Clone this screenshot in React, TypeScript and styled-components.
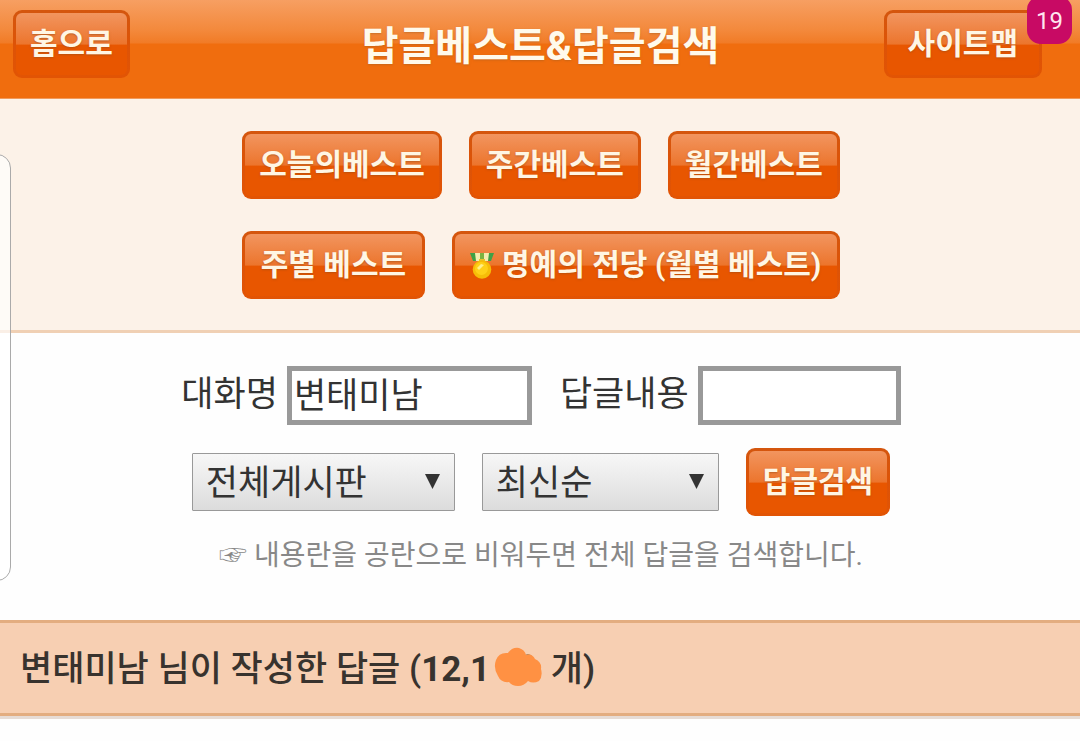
import React from "react";
import styled, { createGlobalStyle, css } from "styled-components";

const GlobalStyle = createGlobalStyle`
  *, *::before, *::after { box-sizing: border-box; }
  body {
    margin: 0;
    background: #fefefe;
    color: #333;
    font-family: Roboto, "Noto Sans CJK KR", sans-serif;
  }
  button, input, select { font-family: inherit; margin: 0; }
`;

const Page = styled.div`
  position: relative;
  overflow: hidden;
  padding-bottom: 20px;
`;

const Header = styled.header`
  display: grid;
  grid-template-columns: 1fr auto 1fr;
  align-items: start;
  padding: 10px 38px 18px 13px;
  border-bottom: 1px solid #f09a5c;
  background: linear-gradient(#f79f62 0, #f3893c 30px, #f17b26 43px, #f06d0e 44px);
`;

const Title = styled.h1`
  margin: 0;
  padding: 4px 0 0 26px;
  font-size: 40px;
  line-height: 66px;
  font-weight: 700;
  color: #fffaec;
  text-shadow: 0 1px 2px #a8602088;
`;

const GlossyButton = styled.button<{ $wide?: boolean }>`
  display: inline-flex;
  align-items: center;
  justify-content: center;
  gap: 8px;
  height: 68px;
  padding: 0 ${(p) => (p.$wide ? 21 : 14)}px;
  border: 3px solid transparent;
  border-radius: 9px;
  background:
    linear-gradient(#f2955f 0, #ec752d 50%, #e85600 52%, #e85600 100%) padding-box,
    linear-gradient(#d4560e 0, #dd5307 50%, #e25404 100%) border-box;
  color: #fff6e4;
  font-size: 30px;
  line-height: 44px;
  font-weight: 700;
  white-space: nowrap;
  text-shadow: 0 1px 2px #9c4c1499;
  cursor: pointer;
`;

const SitemapSlot = styled.div`
  position: relative;
  justify-self: end;
`;

const Badge = styled.span`
  position: absolute;
  top: -14px;
  right: -30px;
  width: 45px;
  padding: 8px 0 6px;
  border-radius: 14px;
  background: #c80a64;
  color: #ffe6f0;
  font-size: 24px;
  line-height: 34px;
  text-align: center;
`;

const BestNav = styled.nav`
  display: grid;
  justify-content: center;
  gap: 32px;
  padding: 32px 14px 31px 16px;
  border-bottom: 3px solid #f0d0b4;
  background: #fcf2e8;
`;

const Row = styled.div<{ $gap: number }>`
  display: flex;
  flex-wrap: wrap;
  align-items: center;
  justify-content: center;
  gap: ${(p) => p.$gap}px;
`;

const NavRow = styled(Row)`
  & > ${GlossyButton} { flex: 1 1 auto; }
`;

const SearchForm = styled.form`
  display: flex;
  flex-direction: column;
  align-items: center;
  padding: 33px 14px 43px 16px;
`;

const Field = styled.div`
  display: flex;
  align-items: center;
  gap: 9px;
`;

const Label = styled.label`
  padding-bottom: 2px;
  font-size: 35px;
  line-height: 48px;
`;

const controlText = css`
  font-size: 35px;
  line-height: 48px;
  color: #333;
`;

const TextInput = styled.input<{ $width: number }>`
  ${controlText}
  width: ${(p) => p.$width}px;
  height: 59px;
  padding: 0 2px 6px;
  border: 5px solid #999;
  border-radius: 0;
  background: #fff;
  outline: none;
`;

const Controls = styled(Row)`
  margin-top: 23px;
`;

const SelectBox = styled.div`
  position: relative;
  display: flex;
`;

const Select = styled.select<{ $width: number }>`
  ${controlText}
  appearance: none;
  width: ${(p) => p.$width}px;
  height: 58px;
  padding: 4px 13px 0;
  border: 1px solid #999;
  border-radius: 1px;
  background: linear-gradient(#f7f7f7, #dcdcdc);
`;

const Arrow = styled.svg`
  position: absolute;
  right: 15px;
  top: 21px;
  pointer-events: none;
`;

const Hint = styled.p`
  margin: 19px 0 0;
  color: #888;
  font-size: 28px;
  line-height: 42px;
`;

const Summary = styled.h2`
  margin: 0;
  padding: 23px 20px 19px;
  border-top: 3px solid #e3ad80;
  border-bottom: 3px solid #e3ad80;
  box-shadow: 0 3px 0 #e6dcd6;
  background: #f7cfb2;
  color: #38332e;
  font-size: 35px;
  line-height: 48px;
  font-weight: 500;
`;

const Count = styled.span`
  font-weight: 700;
`;

const Scribble = styled.svg`
  vertical-align: -6px;
  margin-left: 4px;
`;

const EdgePanel = styled.div`
  position: absolute;
  left: -30px;
  top: 154px;
  width: 41px;
  height: 427px;
  border: 1px solid #aaa;
  border-radius: 14px;
  background: #ffffffaa;
  pointer-events: none;
`;

function Medal() {
  return (
    <svg width="24" height="28" viewBox="0 0 24 28" aria-hidden="true">
      <path d="M0 2h24l-3 8H3z" fill="#3fa046" />
      <path d="M5 2h5v8H6zM14 2h5l-1 8h-4z" fill="#f3edb0" />
      <path d="M10 2h4v8h-4z" fill="#7cb342" />
      <path d="M9 8h6v3H9z" fill="#e8c22c" />
      <circle cx="12" cy="18.5" r="9.3" fill="#f6bd08" />
      <circle cx="11.5" cy="17.5" r="6.5" fill="#ffd018" />
      <path d="M7 17l4-4 3 1-5 5z" fill="#fff08a" />
    </svg>
  );
}

function Dropdown({ width, label, options }: { width: number; label: string; options: string[] }) {
  return (
    <SelectBox>
      <Select $width={width} aria-label={label}>
        {options.map((o) => (
          <option key={o}>{o}</option>
        ))}
      </Select>
      <Arrow width="15" height="15" viewBox="0 0 15 15" aria-hidden="true">
        <path d="M0 0h15L7.5 15z" fill="#333" />
      </Arrow>
    </SelectBox>
  );
}

export default function App() {
  return (
    <Page>
      <GlobalStyle />
      <Header>
        <div>
          <GlossyButton type="button">홈으로</GlossyButton>
        </div>
        <Title>답글베스트&amp;답글검색</Title>
        <SitemapSlot>
          <GlossyButton type="button" $wide>사이트맵</GlossyButton>
          <Badge>19</Badge>
        </SitemapSlot>
      </Header>

      <BestNav>
        <NavRow $gap={27}>
          <GlossyButton type="button">오늘의베스트</GlossyButton>
          <GlossyButton type="button">주간베스트</GlossyButton>
          <GlossyButton type="button">월간베스트</GlossyButton>
        </NavRow>
        <NavRow $gap={27}>
          <GlossyButton type="button">주별 베스트</GlossyButton>
          <GlossyButton type="button">
            <Medal />
            명예의 전당 (월별 베스트)
          </GlossyButton>
        </NavRow>
      </BestNav>

      <SearchForm onSubmit={(e) => e.preventDefault()}>
        <Row $gap={28}>
          <Field>
            <Label htmlFor="nickname">대화명</Label>
            <TextInput id="nickname" $width={245} defaultValue="변태미남" />
          </Field>
          <Field>
            <Label htmlFor="content">답글내용</Label>
            <TextInput id="content" $width={203} />
          </Field>
        </Row>
        <Controls $gap={27}>
          <Dropdown width={263} label="게시판" options={["전체게시판"]} />
          <Dropdown width={237} label="정렬" options={["최신순"]} />
          <GlossyButton type="submit">답글검색</GlossyButton>
        </Controls>
        <Hint>☞ 내용란을 공란으로 비워두면 전체 답글을 검색합니다.</Hint>
      </SearchForm>

      <Summary>
        변태미남 님이 작성한 답글 (<Count>12,1</Count>
        <Scribble width="48" height="40" viewBox="0 0 48 40" aria-hidden="true">
          <path d="M31 8q4-2 7 1l-3 4z" fill="#8a6a44" />
          <path
            d="M2 13Q5 5 14 6Q18 0 25 1Q31 3 32 8Q38 6 41 12Q48 15 47 22Q49 29 45 34Q39 37 34 34Q30 39 24 39Q18 39 15 35Q7 36 4 29Q-1 21 2 13Z"
            fill="#ff9143"
          />
        </Scribble>{" "}
        개)
      </Summary>
      <EdgePanel />
    </Page>
  );
}
